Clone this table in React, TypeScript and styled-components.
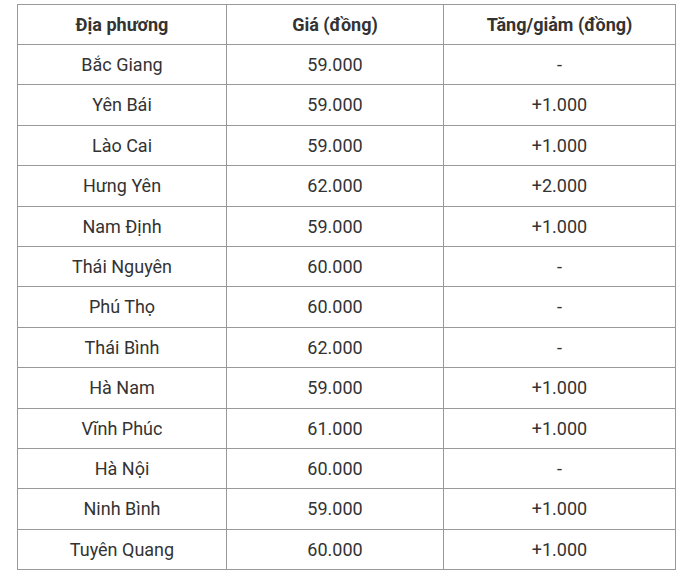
import React from "react";
import styled, { createGlobalStyle } from "styled-components";

const Global = createGlobalStyle`
  html, body { margin: 0; padding: 0; background: #fff; }
  body { font-family: Roboto, "Noto Sans", Arial, sans-serif; }
`;

const Page = styled.div`
  padding: 4px 16px 0 17px;
`;

const Table = styled.table`
  border-collapse: collapse;
  width: 658px;
  table-layout: fixed;
  color: #333;
  font-size: 18px;
`;

const Th = styled.th<{ $w: number }>`
  width: ${(p) => p.$w}px;
  border: 1px solid #999;
  font-weight: 700;
  text-align: center;
  padding: 8px 8px;
  line-height: 23px;
  height: 40px;
  box-sizing: border-box;
`;

const Td = styled.td`
  border: 1px solid #999;
  text-align: center;
  padding: 8px 8px;
  line-height: 23.4px;
  font-weight: 400;
`;

const rows: [string, string, string][] = [
  ["Bắc Giang", "59.000", "-"],
  ["Yên Bái", "59.000", "+1.000"],
  ["Lào Cai", "59.000", "+1.000"],
  ["Hưng Yên", "62.000", "+2.000"],
  ["Nam Định", "59.000", "+1.000"],
  ["Thái Nguyên", "60.000", "-"],
  ["Phú Thọ", "60.000", "-"],
  ["Thái Bình", "62.000", "-"],
  ["Hà Nam", "59.000", "+1.000"],
  ["Vĩnh Phúc", "61.000", "+1.000"],
  ["Hà Nội", "60.000", "-"],
  ["Ninh Bình", "59.000", "+1.000"],
  ["Tuyên Quang", "60.000", "+1.000"],
];

export default function App() {
  return (
    <Page>
      <Global />
      <Table>
        <thead>
          <tr>
            <Th $w={209}>Địa phương</Th>
            <Th $w={217}>Giá (đồng)</Th>
            <Th $w={232}>Tăng/giảm (đồng)</Th>
          </tr>
        </thead>
        <tbody>
          {rows.map((r) => (
            <tr key={r[0]}>
              <Td>{r[0]}</Td>
              <Td>{r[1]}</Td>
              <Td>{r[2]}</Td>
            </tr>
          ))}
        </tbody>
      </Table>
    </Page>
  );
}
